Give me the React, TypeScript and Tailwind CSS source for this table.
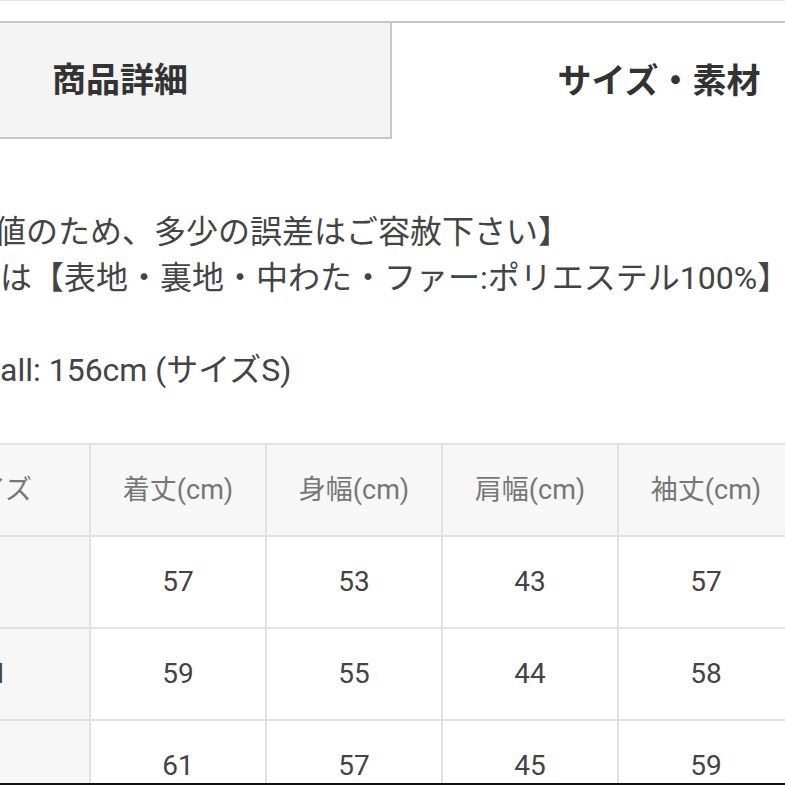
import React from "react";

const font = { fontFamily: 'Roboto, "Noto Sans CJK JP", "Noto Sans", sans-serif' };

const header = ["サイズ", "着丈(cm)", "身幅(cm)", "肩幅(cm)", "袖丈(cm)"];
const rows = [
  ["S", "57", "53", "43", "57"],
  ["M", "59", "55", "44", "58"],
  ["L", "61", "57", "45", "59"],
];

export default function App() {
  return (
    <div
      className="w-[785px] h-[785px] overflow-hidden bg-white border-b-2 border-[#111] flex flex-col"
      style={font}
    >
      <div className="h-[1px] bg-[#e6e6e6] shrink-0" />
      <div className="h-[20px] bg-white shrink-0" />
      <div className="h-[2px] bg-[#c6c6c6] shrink-0" />
      <div className="flex -ml-[150px] w-[1084px] h-[116px] shrink-0">
        <div className="w-[542px] h-full bg-[#f4f4f4] border-r-2 border-b-2 border-[#c8c8c8] flex items-center justify-center text-[34px] font-bold text-[#333]">
          商品詳細
        </div>
        <div className="w-[542px] h-full bg-white flex items-center justify-center pr-[8px] text-[34px] font-bold text-[#333]">
          サイズ・素材
        </div>
      </div>

      <div className="mt-[70px] text-[32px] leading-[46px] text-[#444] whitespace-nowrap shrink-0">
        <div className="-ml-[6px]">値のため、多少の誤差はご容赦下さい】</div>
        <div>は【表地・裏地・中わた・ファー:ポリエステル100%】</div>
        <div className="h-[46px]" />
        <div>all: 156cm (サイズS)</div>
      </div>

      <div className="mt-[50px] -ml-[87px] w-[880px] shrink-0 border-t-2 border-l-2 border-[#e2e2e2]">
        <div className="grid grid-cols-[176px_176px_176px_176px_176px] h-[92px]">
          {header.map((h, i) => (
            <div
              key={h}
              className={`flex items-center justify-center bg-[#f7f7f7] border-r-2 border-b-2 border-[#e2e2e2] text-[27px] text-[#777] ${i === 0 ? "pr-[20px]" : ""}`}
            >
              {h}
            </div>
          ))}
        </div>
        {rows.map((r) => (
          <div key={r[0]} className="grid grid-cols-[176px_176px_176px_176px_176px] h-[92px]">
            {r.map((c, i) => (
              <div
                key={i}
                className={`flex items-center justify-center border-r-2 border-b-2 border-[#e2e2e2] text-[28px] text-[#444] ${i === 0 ? "bg-[#f7f7f7] pr-[20px]" : "bg-white"}`}
              >
                {c}
              </div>
            ))}
          </div>
        ))}
      </div>
    </div>
  );
}
